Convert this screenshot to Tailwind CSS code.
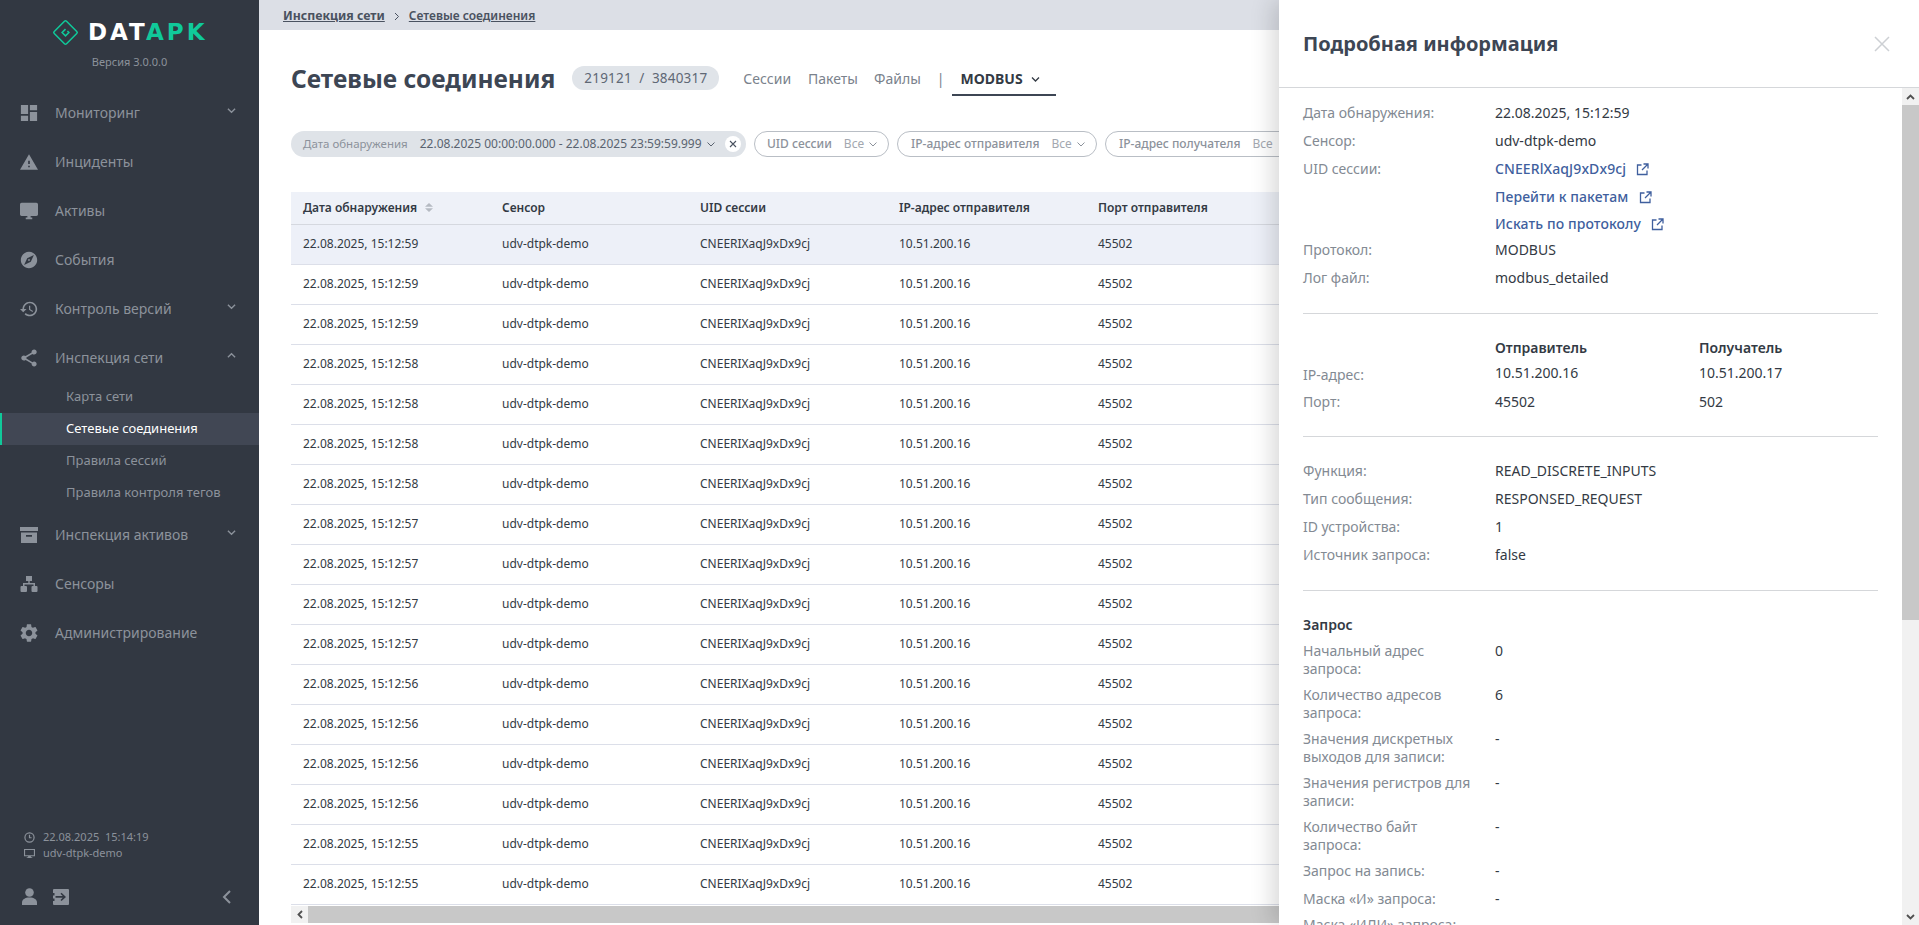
<!DOCTYPE html>
<html lang="ru">
<head>
    <meta charset="UTF-8">
    <title>Сетевые соединения</title>
    <script src="https://cdn.jsdelivr.net/npm/@tailwindcss/browser@4"></script>
</head>
<body class="h-[925px] w-[1919px] overflow-hidden bg-white font-['Noto_Sans',sans-serif] text-[#333a44]">
<div class="relative flex h-[925px] w-[1919px] overflow-hidden">

    <!-- Sidebar -->
    <aside class="flex h-full w-[259px] shrink-0 flex-col bg-[#323842] text-[#8c929b]">
        <div class="flex h-[88px] shrink-0 flex-col">
            <div class="mt-[18px] flex h-[28px] items-center gap-[9px] pl-[52px]">
                <svg class="h-[27px] w-[27px]" viewBox="0 0 28 28" fill="none" stroke="#10c99a" stroke-width="1.6">
                    <rect x="5" y="5" width="18" height="18" rx="1.5" transform="rotate(45 14 14)"/>
                    <path d="M14 10.500L10.500 14l3.500 3.500 3.500-3.500-1.500-1.500"/>
                </svg>
                <span class="font-['DejaVu_Sans',sans-serif] text-[23px] leading-none font-bold tracking-[3px]"><span class="text-white">DAT</span><span class="text-[#10c99a]">APK</span></span>
            </div>
            <div class="mt-[6px] text-center text-[11px] leading-[20px]">Версия 3.0.0.0</div>
        </div>

        <nav class="text-[14px]">
            <a class="flex h-[49px] items-center pr-[23px] pl-[20px]">
                <svg class="mr-[17px] h-[18px] w-[18px] fill-[#8c929b]" viewBox="2 2 20 20"><path d="M3 13h8V3H3v10zm0 8h8v-6H3v6zm10 0h8V11h-8v10zm0-18v6h8V3h-8z"/></svg>
                <span class="flex-1">Мониторинг</span>
                <svg class="-mt-[5px] h-[9px] w-[9px] stroke-[#8c929b]" viewBox="0 0 10 10" fill="none" stroke-width="1.5"><path d="M1 3l4 4 4-4"/></svg>
            </a>
            <a class="flex h-[49px] items-center pr-[23px] pl-[20px]">
                <svg class="mr-[17px] h-[18px] w-[18px] fill-[#8c929b]" viewBox="1 2 22 19"><path d="M1 21h22L12 2 1 21zm12-3h-2v-2h2v2zm0-4h-2v-4h2v4z"/></svg>
                <span class="flex-1">Инциденты</span>
            </a>
            <a class="flex h-[49px] items-center pr-[23px] pl-[20px]">
                <svg class="mr-[17px] h-[18px] w-[18px] fill-[#8c929b]" viewBox="1 2 22 20"><path d="M21 2H3c-1.100 0-2 .9-2 2v12c0 1.100.9 2 2 2h7v2H8v2h8v-2h-2v-2h7c1.100 0 2-.9 2-2V4c0-1.100-.9-2-2-2z"/></svg>
                <span class="flex-1">Активы</span>
            </a>
            <a class="flex h-[49px] items-center pr-[23px] pl-[20px]">
                <svg class="mr-[17px] h-[18px] w-[18px] fill-[#8c929b]" viewBox="1 1 22 22"><path d="M12 10.900c-.61 0-1.100.49-1.100 1.100s.49 1.100 1.100 1.100c.61 0 1.100-.49 1.100-1.100s-.49-1.100-1.100-1.100zM12 2C6.480 2 2 6.480 2 12s4.480 10 10 10 10-4.480 10-10S17.520 2 12 2zm2.190 12.190L6 18l3.810-8.190L18 6l-3.810 8.190z"/></svg>
                <span class="flex-1">События</span>
            </a>
            <a class="flex h-[49px] items-center pr-[23px] pl-[20px]">
                <svg class="mr-[17px] h-[18px] w-[18px] fill-[#8c929b]" viewBox="1 2 22 20"><path d="M13 3c-4.970 0-9 4.030-9 9H1l3.890 3.890.07.14L9 12H6c0-3.870 3.130-7 7-7s7 3.130 7 7-3.130 7-7 7c-1.930 0-3.680-.79-4.940-2.060l-1.420 1.420C8.270 19.990 10.510 21 13 21c4.970 0 9-4.030 9-9s-4.030-9-9-9zm-1 5v5l4.280 2.540.72-1.210-3.500-2.080V8H12z"/></svg>
                <span class="flex-1">Контроль версий</span>
                <svg class="-mt-[5px] h-[9px] w-[9px] stroke-[#8c929b]" viewBox="0 0 10 10" fill="none" stroke-width="1.5"><path d="M1 3l4 4 4-4"/></svg>
            </a>
            <a class="flex h-[49px] items-center pr-[23px] pl-[20px]">
                <svg class="mr-[17px] h-[18px] w-[18px] fill-[#8c929b]" viewBox="1.500 1.500 21 21"><path d="M18 16.080c-.76 0-1.440.3-1.960.77L8.910 12.700c.05-.23.09-.46.09-.7s-.04-.47-.09-.7l7.050-4.110c.54.5 1.250.81 2.040.81 1.660 0 3-1.340 3-3s-1.340-3-3-3-3 1.340-3 3c0 .24.04.47.09.7L8.040 9.810C7.500 9.310 6.790 9 6 9c-1.660 0-3 1.340-3 3s1.340 3 3 3c.79 0 1.500-.31 2.040-.81l7.120 4.160c-.05.21-.08.43-.08.65 0 1.610 1.310 2.920 2.920 2.920 1.610 0 2.920-1.310 2.920-2.920s-1.310-2.920-2.920-2.920z"/></svg>
                <span class="flex-1">Инспекция сети</span>
                <svg class="-mt-[5px] h-[9px] w-[9px] stroke-[#8c929b]" viewBox="0 0 10 10" fill="none" stroke-width="1.5"><path d="M1 7l4-4 4 4"/></svg>
            </a>
            <div class="-mt-[1px] mb-[1px] text-[13px]">
                <a class="flex h-[32px] items-center pl-[66px]">Карта сети</a>
                <a class="flex h-[32px] items-center border-l-2 border-[#10c99a] bg-[#414754] pl-[64px] text-white">Сетевые соединения</a>
                <a class="flex h-[32px] items-center pl-[66px]">Правила сессий</a>
                <a class="flex h-[32px] items-center pl-[66px]">Правила контроля тегов</a>
            </div>
            <a class="flex h-[49px] items-center pr-[23px] pl-[20px]">
                <svg class="mr-[17px] h-[18px] w-[18px] fill-[#8c929b]" viewBox="0 0 18 18"><path fill-rule="evenodd" d="M0 1h18v4H0zM1 6.500h16V17H1zM6 9v1.800h6V9z"/></svg>
                <span class="flex-1">Инспекция активов</span>
                <svg class="-mt-[5px] h-[9px] w-[9px] stroke-[#8c929b]" viewBox="0 0 10 10" fill="none" stroke-width="1.5"><path d="M1 3l4 4 4-4"/></svg>
            </a>
            <a class="flex h-[49px] items-center pr-[23px] pl-[20px]">
                <svg class="mr-[17px] h-[18px] w-[18px] fill-[#8c929b]" viewBox="0 0 18 18"><path d="M6 1h6v5H9.700v2H15v3h1.500a1 1 0 0 1 1 1v4a1 1 0 0 1-1 1h-4a1 1 0 0 1-1-1v-4a1 1 0 0 1 1-1H13.500V9.500h-9V11H6a1 1 0 0 1 1 1v4a1 1 0 0 1-1 1H1.500a1 1 0 0 1-1-1v-4a1 1 0 0 1 1-1H3V8h5.300V6H6z"/></svg>
                <span class="flex-1">Сенсоры</span>
            </a>
            <a class="flex h-[49px] items-center pr-[23px] pl-[20px]">
                <svg class="mr-[17px] h-[18px] w-[18px] fill-[#8c929b]" viewBox="2.500 2 19 20"><path d="M19.140 12.940c.04-.3.06-.61.06-.94 0-.32-.02-.64-.07-.94l2.030-1.580c.18-.14.23-.41.12-.61l-1.920-3.320c-.12-.22-.37-.29-.59-.22l-2.390.96c-.5-.38-1.030-.7-1.620-.94l-.36-2.540c-.04-.24-.24-.41-.48-.41h-3.840c-.24 0-.43.17-.47.41l-.36 2.540c-.59.24-1.130.57-1.620.94l-2.390-.96c-.22-.08-.47 0-.59.22L2.740 8.870c-.12.21-.08.47.12.61l2.030 1.580c-.05.3-.09.63-.09.94s.02.64.07.94l-2.030 1.580c-.18.14-.23.41-.12.61l1.920 3.320c.12.22.37.29.59.22l2.390-.96c.5.38 1.030.7 1.620.94l.36 2.540c.05.24.24.41.48.41h3.840c.24 0 .44-.17.47-.41l.36-2.540c.59-.24 1.130-.56 1.620-.94l2.390.96c.22.08.47 0 .59-.22l1.920-3.320c.12-.22.07-.47-.12-.61l-2.010-1.580zM12 15.600c-1.980 0-3.600-1.620-3.600-3.600s1.620-3.600 3.600-3.600 3.600 1.620 3.600 3.600-1.620 3.600-3.600 3.600z"/></svg>
                <span class="flex-1">Администрирование</span>
            </a>
        </nav>

        <div class="mt-auto pb-[20px] text-[11px] leading-[16px]">
            <div class="flex items-center gap-[8px] pl-[24px]">
                <svg class="h-[11px] w-[11px]" viewBox="0 0 12 12" fill="none" stroke="#8c929b" stroke-width="1.300"><circle cx="6" cy="6" r="5"/><path d="M6 3v3.300h2.300"/></svg>
                <span>22.08.2025&nbsp;&nbsp;15:14:19</span>
            </div>
            <div class="flex items-center gap-[8px] pl-[24px]">
                <svg class="h-[11px] w-[11px] fill-[#8c929b]" viewBox="0 0 12 12"><path fill-rule="evenodd" d="M0 1h12v8H7.500v1H9v1H3v-1h1.500V9H0zM1.200 2.200v5.600h9.600V2.200z"/></svg>
                <span>udv-dtpk-demo</span>
            </div>
            <div class="mt-[27px] flex items-center pr-[28px] pl-[22px]">
                <svg class="h-[17px] w-[15px] fill-[#8c929b]" viewBox="0 0 15 17"><circle cx="7.500" cy="4.500" r="4.300"/><path d="M0 17v-2.500C0 11.500 3 9.500 7.500 9.500s7.500 2 7.500 5V17z"/></svg>
                <svg class="ml-[16px] h-[16px] w-[16px] fill-[#8c929b]" viewBox="0 0 16 16"><path fill-rule="evenodd" d="M1 0h14a1 1 0 0 1 1 1v14a1 1 0 0 1-1 1H1a1 1 0 0 1-1-1v-3h1.500v-2.500H0V6.500h1.500V4H0V1a1 1 0 0 1 1-1zM8.500 3.800l-1 1L9.700 7H2.500v1.800h7.200l-2.200 2.200 1 1L13 8z"/></svg>
                <svg class="ml-auto h-[14px] w-[9px] stroke-[#8c929b]" viewBox="0 0 9 14" fill="none" stroke-width="2"><path d="M8 1L2 7l6 6"/></svg>
            </div>
        </div>
    </aside>

    <!-- Main content -->
    <main class="flex min-w-0 flex-1 flex-col">
        <div class="flex h-[30px] shrink-0 items-center bg-[#dcdfe6] pt-[2px] pl-[24px] text-[#4a5260]">
            <a class="text-[12.300px] font-bold underline">Инспекция сети</a>
            <svg class="mx-[9px] h-[9px] w-[6px] stroke-[#4a5260]" viewBox="0 0 6 9" fill="none" stroke-width="1"><path d="M1 1l3.500 3.500L1 8"/></svg>
            <a class="text-[12px] font-semibold underline">Сетевые соединения</a>
        </div>

        <div class="flex h-[101px] shrink-0 items-start pt-[31px] pl-[32px]">
            <h1 class="text-[24.500px] leading-[36px] font-bold text-[#3d4654]">Сетевые соединения</h1>
            <span class="mt-[5px] ml-[17px] flex h-[24px] items-center rounded-full bg-[#e0e4e9] px-[12px] text-[13.500px] tracking-[0.2px] whitespace-pre text-[#5f6875]">219121  /  3840317</span>
            <div class="mt-[7px] ml-[24px] flex items-start text-[14px] leading-[22px] text-[#7a828c]">
                <a>Сессии</a>
                <a class="ml-[17px]">Пакеты</a>
                <a class="ml-[16px]">Файлы</a>
                <span class="ml-[16px]">|</span>
                <a class="ml-[8px] flex h-[28px] w-[104px] items-start gap-[8px] border-b-2 border-[#3d4654] pl-[8px] font-bold text-[#333a44]">
                    MODBUS
                    <svg class="mt-[8px] h-[7px] w-[9px] stroke-[#333a44]" viewBox="0 0 9 7" fill="none" stroke-width="1.300"><path d="M1 1.500l3.500 3.500L8 1.500"/></svg>
                </a>
            </div>
        </div>

        <div class="flex h-[26px] shrink-0 items-center gap-[8px] pl-[32px] text-[12px] whitespace-nowrap text-[#8c929b]">
            <div class="flex h-[26px] w-[455px] shrink-0 items-center rounded-full bg-[#dfe3e8] pl-[12px]">
                <span class="text-[11.500px]">Дата обнаружения</span>
                <span class="ml-[12px] text-[#5a6370]">22.08.2025 00:00:00.000 - 22.08.2025 23:59:59.999</span>
                <svg class="ml-[5px] h-[5px] w-[8px] stroke-[#5a6370]" viewBox="0 0 8 5" fill="none" stroke-width="1"><path d="M.5.500L4 4 7.500.500"/></svg>
                <span class="ml-[10px] flex h-[16px] w-[16px] items-center justify-center rounded-full bg-white">
                    <svg class="h-[8px] w-[8px] stroke-[#4a5260]" viewBox="0 0 8 8" fill="none" stroke-width="1.100"><path d="M1 1l6 6M7 1L1 7"/></svg>
                </span>
            </div>
            <div class="flex h-[26px] w-[135px] shrink-0 items-center rounded-full border border-[#b9bec5] pl-[12px]">
                <span class="font-medium">UID сессии</span><span class="ml-[12px] text-[#a3a8b0]">Все</span>
                <svg class="ml-[5px] h-[5px] w-[8px] stroke-[#8c929b]" viewBox="0 0 8 5" fill="none" stroke-width="1"><path d="M.5.500L4 4 7.500.500"/></svg>
            </div>
            <div class="flex h-[26px] w-[200px] shrink-0 items-center rounded-full border border-[#b9bec5] pl-[13px]">
                <span class="font-medium">IP-адрес отправителя</span><span class="ml-[12px] text-[#a3a8b0]">Все</span>
                <svg class="ml-[5px] h-[5px] w-[8px] stroke-[#8c929b]" viewBox="0 0 8 5" fill="none" stroke-width="1"><path d="M.5.500L4 4 7.500.500"/></svg>
            </div>
            <div class="flex h-[26px] w-[190px] shrink-0 items-center rounded-full border border-[#b9bec5] pl-[13px]">
                <span class="font-medium">IP-адрес получателя</span><span class="ml-[12px] text-[#a3a8b0]">Все</span>
            </div>
        </div>

        <div class="mt-[35px] ml-[32px] flex-1 overflow-hidden">
            <table class="w-[1600px] table-fixed border-collapse text-left text-[12px]">
                <colgroup>
                    <col class="w-[199px]"><col class="w-[198px]"><col class="w-[199px]"><col class="w-[199px]"><col class="w-[199px]"><col>
                </colgroup>
                <thead class="bg-[#eef1f8]">
                    <tr class="h-[32px] border-b border-[#d5d8df]">
                        <th class="pl-[12px] font-semibold">
                            <span class="inline-flex items-center gap-[7px]">Дата обнаружения
                                <svg class="h-[9px] w-[10px] fill-[#b5bac2]" viewBox="0 0 10 9"><path d="M5 0l4 3.700H1zM5 9L1 5.300h8z"/></svg>
                            </span>
                        </th>
                        <th class="pl-[12px] font-semibold">Сенсор</th>
                        <th class="pl-[12px] font-semibold">UID сессии</th>
                        <th class="pl-[12px] font-semibold">IP-адрес отправителя</th>
                        <th class="pl-[12px] font-semibold">Порт отправителя</th>
                        <th></th>
                    </tr>
                </thead>
                <tbody id="rows"></tbody>
            </table>
        </div>

        <div class="mb-[2px] ml-[32px] flex h-[17px] shrink-0 bg-[#c8c8c8]">
            <span class="flex h-[17px] w-[17px] items-center justify-center bg-[#f1f1f1]">
                <svg class="h-[9px] w-[6px] stroke-[#505050]" viewBox="0 0 6 9" fill="none" stroke-width="1.800"><path d="M5 1L1.500 4.500 5 8"/></svg>
            </span>
        </div>
    </main>

    <!-- Details drawer -->
    <section class="absolute top-0 right-0 bottom-0 flex w-[640px] flex-col bg-white shadow-[-6px_0_22px_rgba(0,0,0,0.16)]">
        <header class="flex h-[88px] shrink-0 items-start justify-between border-b border-[#d5d7da] pt-[30px] pr-[29px] pl-[24px]">
            <h2 class="text-[20px] leading-[28px] font-bold text-[#3d4654]">Подробная информация</h2>
            <svg class="mt-[6px] h-[16px] w-[16px] stroke-[#cdd0d4]" viewBox="0 0 16 16" fill="none" stroke-width="1.500"><path d="M1 1l14 14M15 1L1 15"/></svg>
        </header>

        <div class="flex min-h-0 flex-1">
            <div class="min-w-0 flex-1 overflow-hidden pt-[16px] pr-[24px] pl-[24px] text-[14px] leading-[18px]">
                <div class="grid grid-cols-[192px_1fr] gap-y-[10px]">
                    <span class="text-[#838a93]">Дата обнаружения:</span><span>22.08.2025, 15:12:59</span>
                    <span class="text-[#838a93]">Сенсор:</span><span>udv-dtpk-demo</span>
                    <span class="text-[#838a93]">UID сессии:</span>
                    <a class="flex items-center gap-[10px] font-medium tracking-[0.1px] text-[#3f5f9e]">CNEERlXaqJ9xDx9cj
                        <svg class="h-[13px] w-[13px] stroke-[#3f5f9e]" viewBox="0 0 13 13" fill="none" stroke-width="1.300"><path d="M5.500 2H1.500v9.500H11V7.500M7.500 1H12v4.500M12 1L6 7"/></svg>
                    </a>
                    <span></span>
                    <a class="flex items-center gap-[10px] font-medium tracking-[0.1px] text-[#3f5f9e]">Перейти к пакетам
                        <svg class="h-[13px] w-[13px] stroke-[#3f5f9e]" viewBox="0 0 13 13" fill="none" stroke-width="1.300"><path d="M5.500 2H1.500v9.500H11V7.500M7.500 1H12v4.500M12 1L6 7"/></svg>
                    </a>
                    <span></span>
                    <a class="-mt-[1px] flex items-center gap-[10px] font-medium tracking-[0.1px] text-[#3f5f9e]">Искать по протоколу
                        <svg class="h-[13px] w-[13px] stroke-[#3f5f9e]" viewBox="0 0 13 13" fill="none" stroke-width="1.300"><path d="M5.500 2H1.500v9.500H11V7.500M7.500 1H12v4.500M12 1L6 7"/></svg>
                    </a>
                    <span class="-mt-[2px] text-[#838a93]">Протокол:</span><span class="-mt-[2px]">MODBUS</span>
                    <span class="text-[#838a93]">Лог файл:</span><span>modbus_detailed</span>
                </div>

                <div class="mt-[26px] mb-[25px] border-t border-[#d5d7da]"></div>

                <div class="grid grid-cols-[192px_204px_1fr]">
                    <span></span><span class="font-semibold">Отправитель</span><span class="font-semibold">Получатель</span>
                    <span class="mt-[9px] text-[#838a93]">IP-адрес:</span><span class="mt-[7px]">10.51.200.16</span><span class="mt-[7px]">10.51.200.17</span>
                    <span class="mt-[9px] text-[#838a93]">Порт:</span><span class="mt-[9px]">45502</span><span class="mt-[9px]">502</span>
                </div>

                <div class="mt-[25px] mb-[25px] border-t border-[#d5d7da]"></div>

                <div class="grid grid-cols-[192px_1fr] gap-y-[10px]">
                    <span class="text-[#838a93]">Функция:</span><span>READ_DISCRETE_INPUTS</span>
                    <span class="text-[#838a93]">Тип сообщения:</span><span>RESPONSED_REQUEST</span>
                    <span class="text-[#838a93]">ID устройства:</span><span>1</span>
                    <span class="text-[#838a93]">Источник запроса:</span><span>false</span>
                </div>

                <div class="mt-[26px] mb-[25px] border-t border-[#d5d7da]"></div>

                <div class="mb-[8px] font-semibold">Запрос</div>
                <div class="grid grid-cols-[192px_1fr] gap-y-[8px]">
                    <span class="pr-[20px] text-[#838a93]">Начальный адрес запроса:</span><span>0</span>
                    <span class="pr-[20px] text-[#838a93]">Количество адресов запроса:</span><span>6</span>
                    <span class="pr-[20px] text-[#838a93]">Значения дискретных выходов для записи:</span><span>-</span>
                    <span class="pr-[20px] text-[#838a93]">Значения регистров для записи:</span><span>-</span>
                    <span class="pr-[20px] text-[#838a93]">Количество байт запроса:</span><span>-</span>
                </div>
                <div class="mt-[8px] grid grid-cols-[192px_1fr] gap-y-[10px]">
                    <span class="text-[#838a93]">Запрос на запись:</span><span>-</span>
                    <span class="text-[#838a93]">Маска «И» запроса:</span><span>-</span>
                    <span class="-mt-[2px] text-[#838a93]">Маска «ИЛИ» запроса:</span><span class="-mt-[2px]">-</span>
                </div>
            </div>

            <!-- vertical scrollbar -->
            <div class="flex w-[17px] shrink-0 flex-col bg-[#f1f1f1]">
                <span class="flex h-[17px] items-center justify-center">
                    <svg class="h-[6px] w-[9px] stroke-[#505050]" viewBox="0 0 9 6" fill="none" stroke-width="1.800"><path d="M1 5l3.500-3.500L8 5"/></svg>
                </span>
                <div class="h-[515px] bg-[#c8c8c8]"></div>
                <span class="mt-auto flex h-[17px] items-center justify-center">
                    <svg class="h-[6px] w-[9px] stroke-[#505050]" viewBox="0 0 9 6" fill="none" stroke-width="1.800"><path d="M1 1l3.500 3.500L8 1"/></svg>
                </span>
            </div>
        </div>
    </section>
</div>

<script>
    const times = ['59', '59', '59', '58', '58', '58', '58', '57', '57', '57', '57', '56', '56', '56', '56', '55', '55'];

    document.getElementById('rows').innerHTML = times.map((sec, i) => `
        <tr class="h-[40px] border-b border-[#dcdfe9] ${i === 0 ? 'bg-[#edf0f8]' : ''}">
            <td class="pl-[12px]">22.08.2025, 15:12:${sec}</td>
            <td class="pl-[12px]">udv-dtpk-demo</td>
            <td class="pl-[12px]">CNEERIXaqJ9xDx9cj</td>
            <td class="pl-[12px]">10.51.200.16</td>
            <td class="pl-[12px]">45502</td>
            <td></td>
        </tr>`).join('');
</script>
</body>
</html>
